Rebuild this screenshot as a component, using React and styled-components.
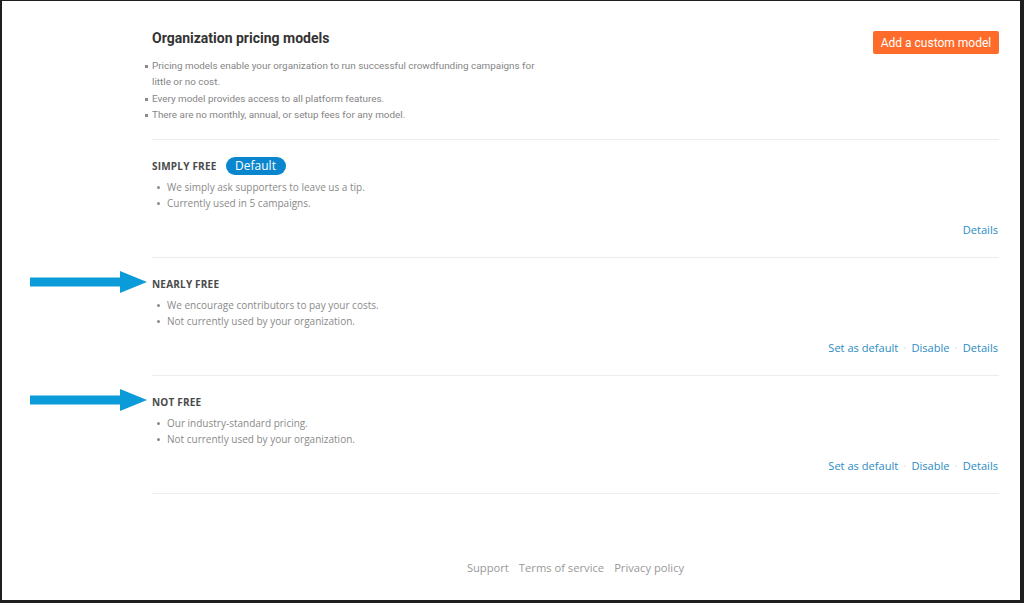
import React from "react";
import styled, { createGlobalStyle } from "styled-components";

const GlobalStyle = createGlobalStyle`
  html, body {
    margin: 0;
    padding: 0;
    background: #ffffff;
  }
  * {
    box-sizing: border-box;
  }
`;

const intro = [
  "Pricing models enable your organization to run successful crowdfunding campaigns for little or no cost.",
  "Every model provides access to all platform features.",
  "There are no monthly, annual, or setup fees for any model.",
];

const models = [
  {
    name: "Simply free",
    isDefault: true,
    points: ["We simply ask supporters to leave us a tip.", "Currently used in 5 campaigns."],
    actions: ["Details"],
  },
  {
    name: "Nearly free",
    arrow: true,
    points: ["We encourage contributors to pay your costs.", "Not currently used by your organization."],
    actions: ["Set as default", "Disable", "Details"],
  },
  {
    name: "Not free",
    arrow: true,
    points: ["Our industry-standard pricing.", "Not currently used by your organization."],
    actions: ["Set as default", "Disable", "Details"],
  },
];

const Arrow = () => (
  <ArrowMark width="118" height="22" viewBox="0 0 118 22">
    <path d="M0 6.5 H90 V0 L117 11 L90 22 V15.5 H0 Z" fill="#0a9bd8" />
  </ArrowMark>
);

const App = () => {
  return (
    <>
      <GlobalStyle />
      <Frame>
        <Content>
          <Header>
            <Title>Organization pricing models</Title>
            <AddButton>Add a custom model</AddButton>
          </Header>
          <IntroList>
            {intro.map((line) => (
              <IntroItem key={line}>{line}</IntroItem>
            ))}
          </IntroList>

          {models.map((model) => (
            <Model key={model.name}>
              {model.arrow && <Arrow />}
              <LabelRow>
                <Label>{model.name}</Label>
                {model.isDefault && <Pill>Default</Pill>}
              </LabelRow>
              <Points>
                {model.points.map((p) => (
                  <Point key={p}>{p}</Point>
                ))}
              </Points>
              <Actions>
                {model.actions.map((a, i) => (
                  <React.Fragment key={a}>
                    {i > 0 && <Dot>·</Dot>}
                    <ActionLink href="#">{a}</ActionLink>
                  </React.Fragment>
                ))}
              </Actions>
            </Model>
          ))}
          <LastRule />

          <Footer>
            <FooterLink href="#">Support</FooterLink>
            <FooterLink href="#">Terms of service</FooterLink>
            <FooterLink href="#">Privacy policy</FooterLink>
          </Footer>
        </Content>
      </Frame>
    </>
  );
};

export default App;

const Frame = styled.div`
  width: 1024px;
  height: 603px;
  border-style: solid;
  border-color: #1e1e1e;
  border-width: 1px 4px 3px 2px;
  background: #ffffff;
  overflow: hidden;
`;

const Content = styled.div`
  margin-left: 150px;
  width: 847px;
  padding-top: 28px;
`;

const Header = styled.div`
  display: flex;
  justify-content: space-between;
  align-items: flex-start;
`;

const Title = styled.h1`
  margin: 0;
  font-family: Roboto, "Liberation Sans", sans-serif;
  font-size: 14px;
  line-height: 18px;
  font-weight: 700;
  color: #333333;
`;

const AddButton = styled.button`
  margin-top: 2px;
  height: 23px;
  width: 126px;
  padding: 0;
  border: none;
  border-radius: 2px;
  background: #ff6b2b;
  color: #ffffff;
  font-family: Roboto, "Liberation Sans", sans-serif;
  font-size: 12px;
  cursor: pointer;
`;

const IntroList = styled.ul`
  list-style: none;
  margin: 4px 0 16px;
  padding: 0;
  max-width: 392px;
`;

const IntroItem = styled.li`
  position: relative;
  font-family: Roboto, "Liberation Sans", sans-serif;
  font-size: 9.9px;
  line-height: 16.3px;
  color: #858585;

  &::before {
    content: "";
    position: absolute;
    left: -7px;
    top: 7px;
    width: 3px;
    height: 3px;
    background: #8a8a8a;
  }
`;

const Model = styled.section`
  position: relative;
  border-top: 1px solid #ececec;
  padding: 17px 0 19px;
`;

const ArrowMark = styled.svg`
  position: absolute;
  left: -122px;
  top: 13px;
`;

const LabelRow = styled.div`
  display: flex;
  align-items: center;
  height: 18px;
`;

const Label = styled.span`
  font-family: "Open Sans", "DejaVu Sans", sans-serif;
  font-size: 10px;
  font-weight: 700;
  letter-spacing: 0.2px;
  text-transform: uppercase;
  color: #4a4a4a;
`;

const Pill = styled.span`
  margin-left: 9px;
  width: 60px;
  height: 18px;
  border-radius: 9px;
  background: #0a86cf;
  color: #ffffff;
  font-family: "Open Sans", "DejaVu Sans", sans-serif;
  font-size: 12px;
  line-height: 18px;
  text-align: center;
`;

const Points = styled.ul`
  list-style: none;
  margin: 4px 0 0;
  padding: 0 0 0 15px;
`;

const Point = styled.li`
  position: relative;
  font-family: "Open Sans", "DejaVu Sans", sans-serif;
  font-size: 10px;
  line-height: 16px;
  color: #8a8a8a;

  &::before {
    content: "";
    position: absolute;
    left: -10px;
    top: 7px;
    width: 3px;
    height: 3px;
    border-radius: 50%;
    background: #8a8a8a;
  }
`;

const Actions = styled.div`
  display: flex;
  justify-content: flex-end;
  align-items: center;
  margin-top: 11px;
  height: 16px;
  padding-right: 1px;
`;

const ActionLink = styled.a`
  font-family: "Open Sans", "DejaVu Sans", sans-serif;
  font-size: 11.1px;
  line-height: 16px;
  color: #2b8cc4;
  text-decoration: none;
`;

const Dot = styled.span`
  margin: 0 5px;
  font-family: "Open Sans", "DejaVu Sans", sans-serif;
  font-size: 12px;
  color: #d3e2ec;
`;

const LastRule = styled.div`
  border-top: 1px solid #ececec;
`;

const Footer = styled.div`
  display: flex;
  justify-content: center;
  gap: 10px;
  margin-top: 66px;
`;

const FooterLink = styled.a`
  font-family: "Open Sans", "DejaVu Sans", sans-serif;
  font-size: 11.2px;
  line-height: 16px;
  color: #999999;
  text-decoration: none;
`;
